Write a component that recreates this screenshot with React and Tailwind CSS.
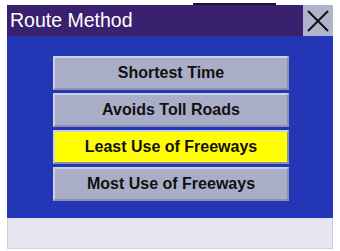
const OPTIONS = [
  { label: "Shortest Time", active: false },
  { label: "Avoids Toll Roads", active: false },
  { label: "Least Use of Freeways", active: true },
  { label: "Most Use of Freeways", active: false },
];

export default function App() {
  return (
    <div className="w-[340px] h-[251px] bg-white overflow-hidden" style={{ fontFamily: '"Liberation Sans", Arial, sans-serif' }}>
      {/* top strip */}
      <div className="h-[5px] pt-[3px] pl-[193px]">
        <div className="w-[83px] h-[2px] bg-[#1a1430]" />
      </div>

      <div className="ml-[7px] w-[326px] flex flex-col">
        {/* header */}
        <div className="flex h-[31px]">
          <div className="flex-1 bg-[#3a216f] flex items-center pl-[3px]">
            <span className="text-white text-[19.5px] leading-none">Route Method</span>
          </div>
          <button className="w-[30px] bg-[#afb3cc] flex items-center justify-center">
            <svg width="22" height="22" viewBox="0 0 22 22">
              <path d="M1 1 L21 21 M21 1 L1 21" stroke="#111" strokeWidth="2" fill="none" />
            </svg>
          </button>
        </div>

        {/* body */}
        <div className="h-[182px] bg-[#2236b6] flex flex-col items-center pt-[20px] gap-[3px] pl-[2px]">
          {OPTIONS.map((o) => (
            <div
              key={o.label}
              className={`w-[236px] h-[34px] flex items-center justify-center border-2 border-t-[#ccd0e4] border-l-[#ccd0e4] border-b-[#8c8fb0] border-r-[#8c8fb0] ${
                o.active ? "bg-[#ffff00]" : "bg-[#a9adc7]"
              }`}
            >
              <span className="text-[16px] font-bold text-[#111]">{o.label}</span>
            </div>
          ))}
        </div>

        {/* bottom bar */}
        <div className="h-[31px] bg-[#e6e6f0] border-l border-r border-b border-[#d0d0d8]" />
      </div>
    </div>
  );
}
